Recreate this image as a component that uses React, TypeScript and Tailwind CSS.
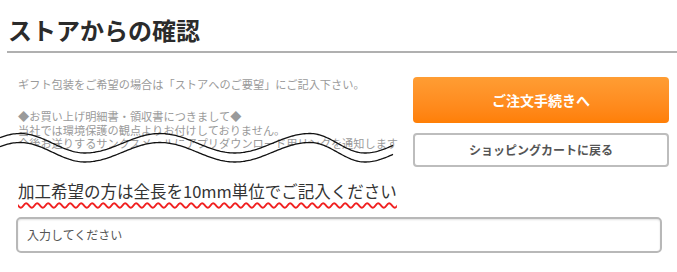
import React from 'react';

const WAVE_W = 393;
const WAVE_TOP = 120;
const CREST = 13.5;
const VALLEY = 33;

// crest / valley x positions of the torn edge, read off the screenshot
const KEYS: [number, number][] = [
  [-45, VALLEY],
  [20, CREST],
  [85, VALLEY],
  [160, CREST],
  [235, VALLEY],
  [310, CREST],
  [365, VALLEY],
  [430, CREST],
];

function edgeY(x: number) {
  for (let i = 0; i < KEYS.length - 1; i++) {
    const [x0, y0] = KEYS[i];
    const [x1, y1] = KEYS[i + 1];
    if (x >= x0 && x <= x1) {
      const t = (x - x0) / (x1 - x0);
      return y0 + ((y1 - y0) * (1 - Math.cos(Math.PI * t))) / 2;
    }
  }
  return VALLEY;
}

function wavePoints(offset: number) {
  const pts: string[] = [];
  for (let x = 0; x <= WAVE_W; x += 1.5) {
    pts.push(`${x},${(edgeY(x) + offset).toFixed(2)}`);
  }
  return pts;
}

function TornEdge() {
  const upper = wavePoints(0);
  const lower = wavePoints(9);
  return (
    <svg
      className="absolute left-0"
      style={{ top: WAVE_TOP }}
      width={WAVE_W + 2}
      height={60}
      viewBox={`0 0 ${WAVE_W + 2} 60`}
    >
      <path d={`M${lower.join(' L')} L${WAVE_W},60 L0,60 Z`} fill="#fff" />
      <path d={`M${upper.join(' L')}`} fill="none" stroke="#111" strokeWidth={1.3} />
      <path d={`M${lower.join(' L')}`} fill="none" stroke="#111" strokeWidth={1.3} />
    </svg>
  );
}

export default function App() {
  return (
    <div
      className="relative w-[677px] h-[272px] overflow-hidden bg-white"
      style={{ fontFamily: '"Noto Sans CJK JP", "Noto Sans", sans-serif' }}
    >
      <h1 className="pl-[8px] pt-[14px] text-[24px] leading-[32px] font-bold text-[#2b2b2b]">
        ストアからの確認
      </h1>
      <div className="ml-[7px] mt-[5px] h-[2px] bg-[#b0b0b0]" />

      <div className="flex mt-[24px]">
        <div className="w-[413px] pl-[18px] text-[11.2px] text-[#9a9a9a] whitespace-nowrap">
          <p className="leading-[14px]">ギフト包装をご希望の場合は「ストアへのご要望」にご記入下さい。</p>
          <p className="mt-[19px] leading-[13.5px]">
            ◆お買い上げ明細書・領収書につきまして◆
            <br />
            当社では環境保護の観点よりお付けしておりません。
            <br />
            今後お送りするサンクスメールにアプリダウンロード用リンクを通知します
          </p>
        </div>
        <div className="w-[256px] flex flex-col gap-[10px]">
          <button className="h-[46px] rounded-[4px] bg-gradient-to-b from-[#ff9d33] to-[#ff7f05] text-white text-[14px] font-bold">
            ご注文手続きへ
          </button>
          <button className="h-[34px] rounded-[4px] border-2 border-[#bdbdbd] bg-white text-[#555] text-[12px] font-bold">
            ショッピングカートに戻る
          </button>
        </div>
      </div>

      <TornEdge />

      <p className="mt-[12px] pl-[18px] text-[16.5px] leading-[24px] text-[#333]">
        <span className="underline decoration-wavy decoration-[1.5px] decoration-[#f02020] underline-offset-[4px]">
          加工希望の方は全長を10mm単位でご記入ください
        </span>
      </p>

      <div className="ml-[16px] mt-[14px] w-[646px] h-[36px] rounded-[5px] border-2 border-[#b8b8b8] shadow-[inset_0_1px_2px_rgba(0,0,0,0.12)] flex items-center pl-[9px]">
        <input
          className="w-full outline-none bg-transparent text-[12px] placeholder:text-[#555]"
          placeholder="入力してください"
        />
      </div>
    </div>
  );
}
